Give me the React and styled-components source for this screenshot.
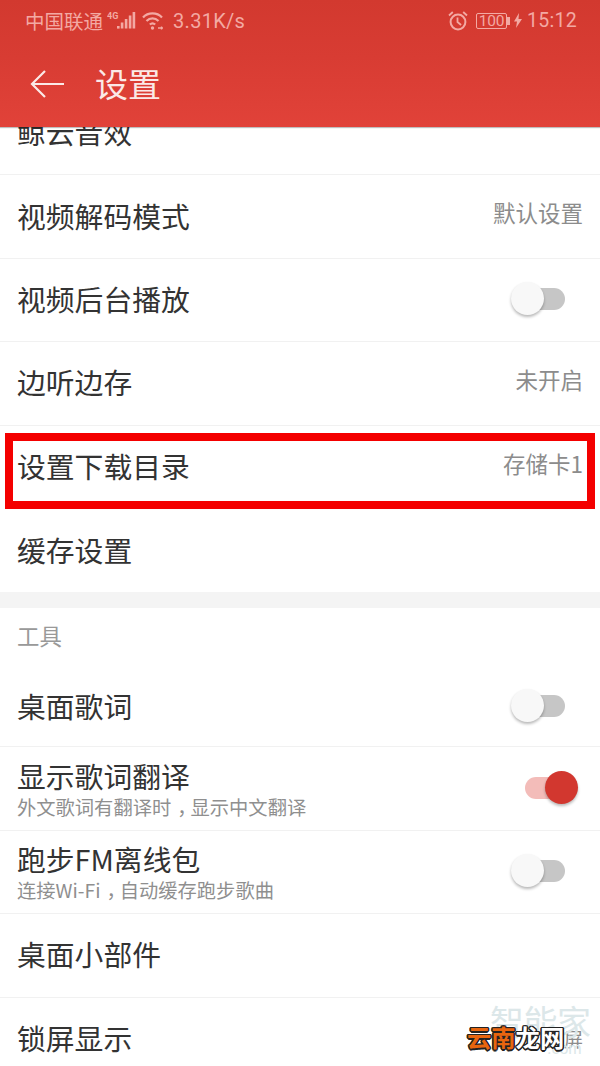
import React from "react";
import styled, { createGlobalStyle } from "styled-components";

const CJK = `"Noto Sans CJK SC", "Noto Sans", sans-serif`;

const Global = createGlobalStyle`
  html, body { margin: 0; padding: 0; background: #fff; }
  body { font-family: ${CJK}; }
`;

const Screen = styled.div`
  position: relative;
  width: 600px;
  height: 1066px;
  overflow: hidden;
  background: #fff;
  display: flex;
  flex-direction: column;
`;

const Header = styled.header`
  flex: 0 0 127px;
  display: flex;
  flex-direction: column;
  background: linear-gradient(180deg, #d2392f 0%, #d83c33 45%, #e14239 100%);
  box-shadow: 0 1px 1px rgba(0, 0, 0, 0.25);
  position: relative;
  z-index: 2;
`;

const StatusBar = styled.div`
  height: 41px;
  display: flex;
  align-items: center;
  padding: 0 23px 0 25px;
  color: #f3a9a3;
`;

const Carrier = styled.span`
  font-size: 19.5px;
  line-height: 1;
`;

const StatusText = styled.span`
  font-family: Roboto, sans-serif;
  font-size: ${(p) => p.$size || 20}px;
  line-height: 1;
  margin-left: ${(p) => p.$gap || 0}px;
  letter-spacing: 0.3px;
`;

const Spacer = styled.div`
  flex: 1;
`;

const StatusIcon = styled.svg`
  display: block;
  flex: none;
  margin-left: ${(p) => p.$gap || 0}px;
`;

const Battery = styled.div`
  position: relative;
  margin-left: 8px;
  width: 31px;
  height: 16px;
  box-sizing: border-box;
  border: 1px solid #f3a9a3;
  border-radius: 2px;
  font-family: Roboto, sans-serif;
  font-size: 15.5px;
  line-height: 14px;
  text-align: center;
  letter-spacing: -0.2px;
  &::after {
    content: "";
    position: absolute;
    right: -4px;
    top: 3px;
    width: 2.5px;
    height: 8px;
    background: #f3a9a3;
  }
`;

const AppBar = styled.div`
  flex: 1;
  display: flex;
  align-items: center;
  padding: 0 0 1px 30px;
  color: #fbe9e7;
`;

const Title = styled.h1`
  margin: 0 0 0 30px;
  font-size: 33px;
  font-weight: 400;
  line-height: 1;
`;

const List = styled.main`
  flex: 1;
  min-height: 0;
  overflow: hidden;
`;

const Scroller = styled.div`
  margin-top: -35px;
`;

const Row = styled.div`
  position: relative;
  box-sizing: border-box;
  height: ${(p) => p.$h || 83.4}px;
  display: flex;
  align-items: center;
  justify-content: space-between;
  padding: 0 17px 0 17px;
  border-bottom: ${(p) => (p.$flat ? "none" : "1px solid #f1f1f1")};
`;

const RowText = styled.div`
  display: flex;
  flex-direction: column;
`;

const RowLabel = styled.div`
  font-size: 28.8px;
  line-height: 34px;
  color: #333;
  position: relative;
  top: ${(p) => (p.$sub ? -2 : -1)}px;
`;

const RowSub = styled.div`
  font-size: 19.3px;
  line-height: 22px;
  color: #8f8f8f;
  position: relative;
  top: 1px;
`;

const SubComma = styled.span`
  position: relative;
  left: 6px;
`;

const RowValue = styled.div`
  font-size: ${(p) => (p.$small ? 19 : 22.5)}px;
  line-height: 1;
  color: #8c8c8c;
  position: relative;
  top: ${(p) => (p.$small ? -1 : -4)}px;
`;

const Track = styled.div`
  position: relative;
  width: 40px;
  height: 22px;
  margin-right: 18px;
  top: -1px;
  border-radius: 11px;
  background: ${(p) => (p.$on ? "#f3bcb9" : "#c6c6c6")};
`;

const Knob = styled.div`
  position: absolute;
  top: -6px;
  left: ${(p) => (p.$on ? "20px" : "-14px")};
  width: 33px;
  height: 33px;
  border-radius: 50%;
  background: ${(p) => (p.$on ? "#d2372f" : "#f8f8f8")};
  box-shadow: 0 2px 3px rgba(0, 0, 0, 0.28);
`;

const SectionGap = styled.div`
  height: 16px;
  background: #f4f4f4;
`;

const SectionTitle = styled.div`
  height: 59px;
  box-sizing: border-box;
  padding: 15px 0 0 17px;
  font-size: 22.4px;
  line-height: 24px;
  color: #999;
`;

const Highlight = styled.div`
  position: absolute;
  left: 5px;
  right: 5px;
  top: 7.5px;
  height: 76px;
  box-sizing: border-box;
  border: 8px solid #f40000;
  pointer-events: none;
`;

const Watermark = styled.div`
  position: absolute;
  left: 490px;
  top: 1004px;
  font-size: 34px;
  line-height: 34px;
  letter-spacing: -0.5px;
  color: #dce7e9;
  z-index: 1;
`;

const WatermarkUrl = styled.div`
  position: absolute;
  left: 547px;
  top: 1041px;
  font-family: "Liberation Sans", sans-serif;
  font-size: 16px;
  line-height: 1;
  color: #dce7e9;
  z-index: 1;
`;

const Brand = styled.div`
  position: absolute;
  left: 467px;
  top: 1022px;
  z-index: 3;
  font-size: 24.3px;
  font-weight: 700;
  line-height: 30px;
  color: #e8650f;
  text-shadow: -1.5px 0 0 #222, 1.5px 0 0 #222, 0 -1.5px 0 #222, 0 1.5px 0 #222,
    -1px -1px 0 #222, 1px 1px 0 #222, -1px 1px 0 #222, 1px -1px 0 #222;
`;

const BrandLight = styled.span`
  color: #fff;
`;

const Signal = () => (
  <StatusIcon width="30" height="20" viewBox="0 0 30 20" $gap={4} fill="#f3a9a3">
    <text x="0" y="7.5" fontSize="9" fontFamily="Roboto, sans-serif" fontWeight="700">4G</text>
    <rect x="10" y="15" width="2.6" height="2.6" />
    <rect x="13.8" y="11.5" width="2.6" height="6" />
    <rect x="17.8" y="8" width="2.6" height="9.5" />
    <rect x="21.8" y="4.5" width="2.6" height="13" />
    <rect x="25.6" y="1" width="2.6" height="16.5" />
  </StatusIcon>
);

const Wifi = () => (
  <StatusIcon width="23" height="20" viewBox="0 0 23 20" $gap={5} fill="none" stroke="#f3a9a3" strokeWidth="2.2">
    <path d="M1 6.5C6 1 15 1 20 6.5" />
    <path d="M4.5 10C8 6.5 13 6.5 16.5 10" />
    <path d="M7.8 13.5C9.5 12 11.5 12 13.2 13.5" />
    <circle cx="10.5" cy="17" r="1.7" fill="#f3a9a3" stroke="none" />
    <path d="M16 17h5M19.5 15.5v3" strokeWidth="1.4" />
  </StatusIcon>
);

const Alarm = () => (
  <StatusIcon width="20" height="21" viewBox="0 0 20 21" fill="none" stroke="#f3a9a3" strokeWidth="2">
    <circle cx="10" cy="12" r="7.4" />
    <path d="M9.5 7.5V12l3.6 3" strokeWidth="1.8" />
    <path d="M1 5.5L4.8 2M19 5.5L15.2 2" strokeWidth="1.8" />
  </StatusIcon>
);

const Bolt = () => (
  <StatusIcon width="8" height="15" viewBox="0 0 8 15" $gap={7} fill="#f3a9a3">
    <path d="M5 0L0 8.5h3L2 15l6-9H4.5z" />
  </StatusIcon>
);

const Back = () => (
  <svg width="35" height="30" viewBox="0 0 35 30" fill="none" stroke="#fbe9e7" strokeWidth="2.2">
    <path d="M34 15H2M15 2L2 15l13 13" />
  </svg>
);

const Toggle = ({ on }) => (
  <Track $on={on}>
    <Knob $on={on} />
  </Track>
);

const SettingRow = ({ label, sub, value, smallValue, toggle, on, flat, h, children }) => (
  <Row $flat={flat} $h={h}>
    <RowText>
      <RowLabel $sub={!!sub}>{label}</RowLabel>
      {sub && <RowSub>{sub}</RowSub>}
    </RowText>
    {value && <RowValue $small={smallValue}>{value}</RowValue>}
    {toggle && <Toggle on={on} />}
    {children}
  </Row>
);

export default function App() {
  return (
    <Screen>
      <Global />
      <Header>
        <StatusBar>
          <Carrier>中国联通</Carrier>
          <Signal />
          <Wifi />
          <StatusText $gap={8}>3.31K/s</StatusText>
          <Spacer />
          <Alarm />
          <Battery>100</Battery>
          <Bolt />
          <StatusText $gap={5} $size={19.5}>15:12</StatusText>
        </StatusBar>
        <AppBar>
          <Back />
          <Title>设置</Title>
        </AppBar>
      </Header>
      <List>
        <Scroller>
          <SettingRow label="鲸云音效" />
          <SettingRow label="视频解码模式" value="默认设置" />
          <SettingRow label="视频后台播放" toggle />
          <SettingRow label="边听边存" value="未开启" />
          <SettingRow label="设置下载目录" value="存储卡1" flat>
            <Highlight />
          </SettingRow>
          <SettingRow label="缓存设置" flat />
          <SectionGap />
          <SectionTitle>工具</SectionTitle>
          <SettingRow label="桌面歌词" toggle h={80} />
          <SettingRow
            label="显示歌词翻译"
            sub={<>外文歌词有翻译时<SubComma>，</SubComma>显示中文翻译</>}
            toggle
            on
          />
          <SettingRow
            label="跑步FM离线包"
            sub={<>连接Wi-Fi<SubComma>，</SubComma>自动缓存跑步歌曲</>}
            toggle
          />
          <SettingRow label="桌面小部件" />
          <SettingRow label="锁屏显示" value="锁屏" smallValue flat />
        </Scroller>
      </List>
      <Watermark>智能家</Watermark>
      <WatermarkUrl>.com</WatermarkUrl>
      <Brand>云南<BrandLight>龙网</BrandLight></Brand>
    </Screen>
  );
}
